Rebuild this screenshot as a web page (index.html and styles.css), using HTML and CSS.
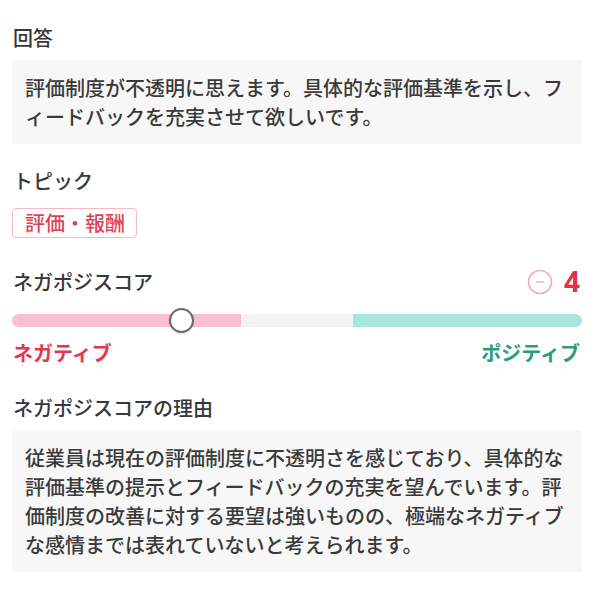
FILE: index.html
```html
<!DOCTYPE html>
<html lang="ja">
<head>
<meta charset="utf-8">
<link rel="stylesheet" href="styles.css">
</head>
<body>
<div class="panel">
  <div class="label">回答</div>
  <div class="textbox">評価制度が不透明に思えます。具体的な評価基準を示し、フィードバックを充実させて欲しいです。</div>

  <div class="label topic-label">トピック</div>
  <div class="tags"><span class="tag">評価・報酬</span></div>

  <div class="score-head">
    <div class="label">ネガポジスコア</div>
    <div class="score">
      <svg class="score-icon" width="26" height="26" viewBox="0 0 26 26">
        <circle cx="13" cy="13" r="11.5" fill="none" stroke="#f4a9b9" stroke-width="1.6"/>
        <line x1="9.5" y1="13" x2="16.5" y2="13" stroke="#f4b3c1" stroke-width="1.6" stroke-linecap="round"/>
      </svg>
      <span class="score-num">4</span>
    </div>
  </div>

  <div class="slider">
    <div class="track">
      <div class="seg neg"></div>
      <div class="seg mid"></div>
      <div class="seg pos"></div>
    </div>
    <div class="knob" style="left: 29.9%"></div>
  </div>
  <div class="ends">
    <span class="end-neg">ネガティブ</span>
    <span class="end-pos">ポジティブ</span>
  </div>

  <div class="label reason-label">ネガポジスコアの理由</div>
  <div class="textbox">従業員は現在の評価制度に不透明さを感じており、具体的な評価基準の提示とフィードバックの充実を望んでいます。評価制度の改善に対する要望は強いものの、極端なネガティブな感情までは表れていないと考えられます。</div>
</div>
</body>
</html>
```

FILE: styles.css
```css
html, body {
  margin: 0;
  padding: 0;
  background: #ffffff;
}

body {
  font-family: "Noto Sans CJK JP", "Noto Sans", sans-serif;
  color: #333333;
}

.panel {
  padding: 23px 18px 0 12px;
  display: flex;
  flex-direction: column;
}

.label {
  font-size: 20px;
  font-weight: 500;
  line-height: 29px;
  color: #383838;
  padding-left: 1px;
}

.textbox {
  margin-top: 8px;
  background: #f7f7f7;
  border-radius: 4px;
  padding: 13px 13px;
  font-size: 20px;
  font-weight: 500;
  line-height: 29px;
  color: #3a3a3a;
}

.topic-label {
  margin-top: 22px;
}

.tags {
  display: flex;
  margin-top: 13px;
}

.tag {
  border: 1px solid #f5b9c4;
  border-radius: 4px;
  color: #dc4354;
  font-size: 20px;
  font-weight: 500;
  line-height: 28px;
  padding: 0 11px 0 12px;
  background: #fff;
}

.score-head {
  margin-top: 29px;
  display: flex;
  justify-content: space-between;
  align-items: center;
}

.score {
  display: flex;
  align-items: center;
  gap: 11px;
  padding-right: 2px;
}

.score-icon {
  display: block;
}

.score-num {
  font-family: "Noto Sans", sans-serif;
  font-weight: 700;
  font-size: 28px;
  line-height: 29px;
  color: #dd3347;
}

.slider {
  position: relative;
  margin-top: 18px;
  height: 13px;
}

.track {
  display: grid;
  grid-template-columns: 228fr 112fr 228fr;
  height: 13px;
  border-radius: 7px;
  overflow: hidden;
}

.seg.neg { background: #f9bfd1; }
.seg.mid { background: #f5f2f3; }
.seg.pos { background: #a6e6dd; }

.knob {
  position: absolute;
  top: 50%;
  width: 21px;
  height: 21px;
  margin-left: -13px;
  margin-top: -13px;
  border: 2.5px solid #6a6a6a;
  border-radius: 50%;
  background: #ffffff;
  box-shadow: 0 1px 2px rgba(0,0,0,0.15);
}

.ends {
  margin-top: 11px;
  display: flex;
  justify-content: space-between;
  font-size: 20px;
  font-weight: 700;
  line-height: 29px;
}

.end-neg {
  color: #e03a50;
  padding-left: 1px;
}

.end-pos {
  color: #2e9a7d;
  padding-right: 2px;
}

.reason-label {
  margin-top: 26px;
}
```
